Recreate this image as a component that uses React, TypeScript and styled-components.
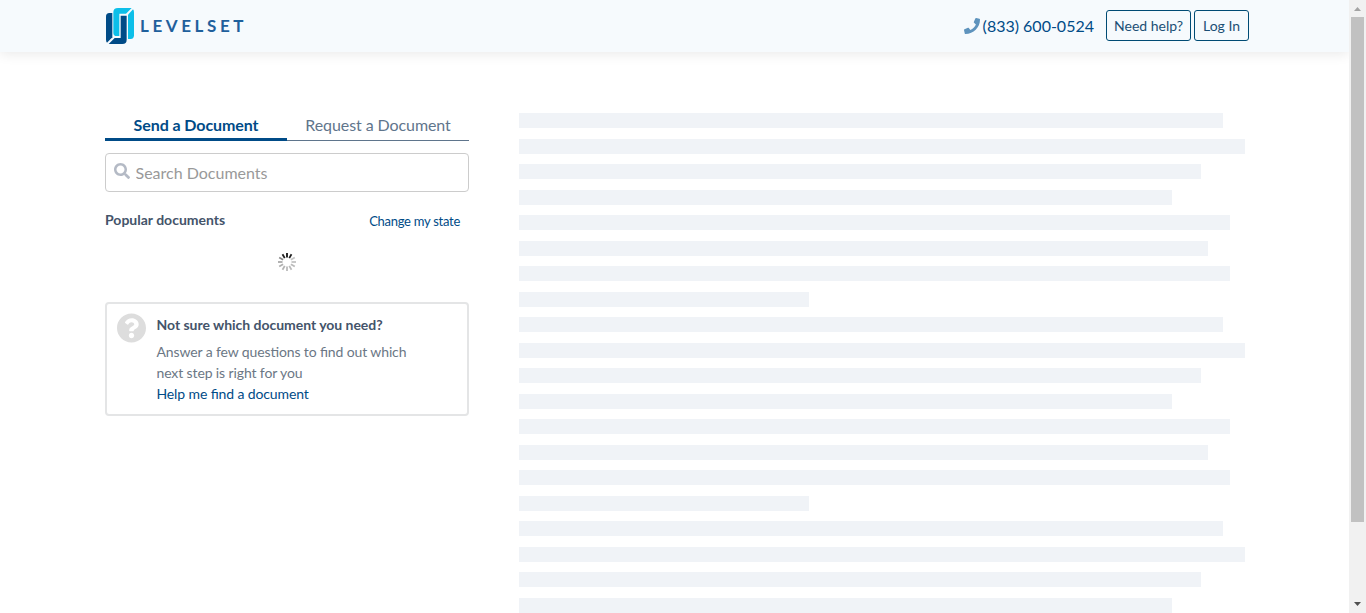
import React from 'react';
import styled, { createGlobalStyle } from 'styled-components';

const GlobalStyle = createGlobalStyle`
  *, *::before, *::after { box-sizing: border-box; }
  html, body { margin: 0; height: 100%; overflow: hidden; }
  body { background: #fff; font-family: Lato, "Liberation Sans", sans-serif; font-size: 16px; color: #5f6f82; }
  a { color: #004b87; text-decoration: none; }
`;

const Shell = styled.div`
  display: flex;
  height: 613px;
  overflow: hidden;
`;

const Page = styled.div`
  width: 1349px;
  height: 613px;
  overflow: hidden;
`;

const Header = styled.header`
  display: flex;
  justify-content: space-between;
  height: 52px;
  padding: 0 100px 0 106px;
  background: #f6fafd;
  box-shadow: 0 2px 12px rgba(0, 0, 0, 0.09);
`;

const Brand = styled.a`
  display: flex;
  align-items: flex-start;
  padding-top: 8px;
`;

const Wordmark = styled.span`
  margin: 7px 0 0 6px;
  font-size: 17px;
  line-height: 22px;
  font-weight: 700;
  letter-spacing: 3.6px;
  color: #1f609c;
`;

const HeaderNav = styled.nav`
  display: flex;
  align-items: flex-start;
  padding-top: 10px;
`;

const Phone = styled.a`
  display: flex;
  align-items: center;
  height: 32px;
  margin-right: 12px;
  font-size: 16px;
  svg { margin-right: 3px; }
`;

const PhoneNumber = styled.span`
  padding-bottom: 2px;
`;

const HeaderButton = styled.a<{ $width: number }>`
  width: ${p => p.$width}px;
  height: 31px;
  margin-left: ${p => (p.$width < 60 ? 3 : 0)}px;
  border: 1px solid #004b74;
  border-radius: 3px;
  font-size: 14px;
  line-height: 30px;
  text-align: center;
  color: #1b4f75;
  white-space: nowrap;
`;

const Content = styled.main`
  display: flex;
  gap: 50px;
  padding: 61px 104px 0 105px;
`;

const Sidebar = styled.section`
  width: 364px;
  flex: none;
`;

const Tabs = styled.div`
  display: flex;
  height: 28px;
`;

const Tab = styled.a<{ $active?: boolean }>`
  flex: 1;
  height: 28px;
  line-height: 23px;
  text-align: center;
  font-size: 16px;
  letter-spacing: -0.08px;
  font-weight: ${p => (p.$active ? 700 : 400)};
  color: ${p => (p.$active ? '#004b87' : '#5f758c')};
  border-bottom: ${p => (p.$active ? '3px solid #004b87' : '1px solid #5f758c')};
`;

const SearchBox = styled.label`
  display: flex;
  align-items: center;
  height: 39px;
  margin-top: 12px;
  padding: 0 8px;
  border: 1px solid #ccc;
  border-radius: 4px;
  svg { margin: 0 5.500px 4px 0; flex: none; }
`;

const SearchInput = styled.input`
  flex: 1;
  min-width: 0;
  height: 36px;
  padding: 0;
  border: 0;
  outline: 0;
  background: transparent;
  font: 400 16px Lato, sans-serif;
  &::placeholder { color: #999; opacity: 1; }
`;

const ListHeader = styled.div`
  display: flex;
  justify-content: space-between;
  height: 40px;
  margin-top: 18px;
  padding-right: 9px;
  line-height: 20px;
`;

const Heading = styled.strong`
  font-size: 14px;
  font-weight: 700;
  color: #44546a;
`;

const StateLink = styled.a`
  padding-top: 1px;
  font-size: 13px;
  letter-spacing: -0.27px;
`;

const Loading = styled.div`
  display: flex;
  justify-content: center;
  height: 52px;
  padding-top: 3px;
`;

const HelpCard = styled.aside`
  display: flex;
  height: 114px;
  padding: 9px 10px;
  border: 2px solid #e4e5e6;
  border-radius: 4px;
  svg { flex: none; margin-right: 10.500px; }
`;

const HelpText = styled.div`
  width: 270px;
  font-size: 14px;
  line-height: 21px;
  letter-spacing: -0.12px;
  font-feature-settings: "liga" 1;
  color: #6b7785;
`;

const HelpTitle = styled(Heading)`
  display: block;
  height: 28px;
  padding-top: 1px;
  letter-spacing: -0.03px;
`;

const Skeleton = styled.section`
  flex: 1;
  display: flex;
  flex-direction: column;
  gap: 10.5px;
`;

const SkeletonLine = styled.div<{ $w: number }>`
  width: ${p => p.$w}px;
  height: 15px;
  flex: none;
  background: #f0f3f7;
`;

const Scrollbar = styled.div`
  display: flex;
  flex-direction: column;
  align-items: center;
  width: 17px;
  height: 613px;
  background: #f1f1f1;
`;

const ScrollThumb = styled.div`
  width: 13px;
  height: 505px;
  margin-bottom: 74px;
  background: #c1c1c1;
`;

const LINE_WIDTHS = [704, 726, 682, 653, 711, 689, 711, 290];
const LINES = Array.from({ length: 20 }, (_, i) => LINE_WIDTHS[i % LINE_WIDTHS.length]);

const SPOKES = ['#111', '#222', '#c4c4c4', '#c4c4c4', '#bbb', '#bbb', '#bbb', '#b4b4b4', '#b0b0b0', '#aaa', '#888', '#222'];

const LogoMark = () => (
  <svg width="28" height="36" viewBox="0 0 84 108">
    <path fill="#004b87" d="M10 15H19V88L3 104Q0 101 0 95V26Q0 15 10 15Z" />
    <path fill="#004b87" d="M44 23H62V95Q62 108 49 108H8L26 90H44Z" />
    <path fill="#0dbfe9" d="M36 0H77L60 17H40V84H32Q22 84 22 74V13Q22 0 36 0Z" />
    <path fill="#0dbfe9" d="M81 4Q84 7 84 13V82Q84 93 74 93H66V20Z" />
  </svg>
);

const PhoneIcon = () => (
  <svg width="16" height="16" viewBox="0 0 512 512" fill="#5e93bd">
    <path d="M493.4 24.6l-104-24c-11.300-2.600-22.900 3.300-27.500 13.900l-48 112c-4.200 9.800-1.400 21.300 6.900 28l60.600 49.600c-36 76.700-98.900 140.500-177.200 177.200l-49.600-60.600c-6.800-8.300-18.200-11.100-28-6.900l-112 48C3.900 366.500-2 378.100.6 389.400l24 104C27.100 504.200 36.700 512 48 512c256.100 0 464-207.500 464-464 0-11.200-7.700-20.900-18.600-23.400z" />
  </svg>
);

const SearchIcon = () => (
  <svg width="16" height="16" viewBox="0 0 512 512" fill="#b4bac5">
    <path d="M505 442.700L405.300 343c-4.500-4.500-10.600-7-17-7H372c27.600-35.300 44-79.700 44-128C416 93.100 322.900 0 208 0S0 93.100 0 208s93.100 208 208 208c48.300 0 92.700-16.400 128-44v16.300c0 6.400 2.500 12.500 7 17l99.700 99.700c9.400 9.400 24.600 9.400 33.900 0l28.300-28.300c9.400-9.400 9.400-24.600.1-34zM208 336c-70.700 0-128-57.200-128-128 0-70.700 57.200-128 128-128 70.700 0 128 57.200 128 128 0 70.700-57.200 128-128 128z" />
  </svg>
);

const QuestionIcon = () => (
  <svg width="29" height="30" viewBox="8 8 496 496" fill="#ddd">
    <path d="M504 256c0 136.997-111.043 248-248 248S8 392.997 8 256C8 119.083 119.043 8 256 8s248 111.083 248 248zM262.655 90c-54.497 0-89.255 22.957-116.549 63.758-3.536 5.286-2.353 12.415 2.715 16.258l34.699 26.310c5.205 3.947 12.621 3.008 16.665-2.122 17.864-22.658 30.113-35.797 57.303-35.797 20.429 0 45.698 13.148 45.698 32.958 0 14.976-12.363 22.667-32.534 33.976C247.128 238.528 216 254.941 216 296v4c0 6.627 5.373 12 12 12h56c6.627 0 12-5.373 12-12v-1.333c0-28.462 83.186-29.647 83.186-106.667 0-58.002-60.165-102-116.531-102zM256 338c-25.365 0-46 20.635-46 46 0 25.364 20.635 46 46 46s46-20.636 46-46c0-25.365-20.635-46-46-46z" />
  </svg>
);

const Spinner = () => (
  <svg width="18" height="18" viewBox="0 0 18 18">
    {SPOKES.map((color, i) => (
      <rect key={i} x="8.100" y="0" width="1.800" height="4.500" fill={color} transform={`rotate(${i * 30} 9 9)`} />
    ))}
  </svg>
);

export default function App() {
  return (
    <>
      <GlobalStyle />
      <Shell>
        <Page>
          <Header>
            <Brand href="#"><LogoMark /><Wordmark>LEVELSET</Wordmark></Brand>
            <HeaderNav>
              <Phone href="#"><PhoneIcon /><PhoneNumber>(833) 600-0524</PhoneNumber></Phone>
              <HeaderButton href="#" $width={85}>Need help?</HeaderButton>
              <HeaderButton href="#" $width={55}>Log In</HeaderButton>
            </HeaderNav>
          </Header>
          <Content>
            <Sidebar>
              <Tabs>
                <Tab $active>Send a Document</Tab>
                <Tab>Request a Document</Tab>
              </Tabs>
              <SearchBox><SearchIcon /><SearchInput placeholder="Search Documents" /></SearchBox>
              <ListHeader>
                <Heading>Popular documents</Heading>
                <StateLink href="#">Change my state</StateLink>
              </ListHeader>
              <Loading><Spinner /></Loading>
              <HelpCard>
                <QuestionIcon />
                <HelpText>
                  <HelpTitle>Not sure which document you need?</HelpTitle>
                  Answer a few questions to find out which next step is right for you<br />
                  <a href="#">Help me find a document</a>
                </HelpText>
              </HelpCard>
            </Sidebar>
            <Skeleton>
              {LINES.map((w, i) => <SkeletonLine key={i} $w={w} />)}
            </Skeleton>
          </Content>
        </Page>
        <Scrollbar>
          <svg width="17" height="17" viewBox="0 0 17 17"><path d="M5 11L8.500 7L12 11Z" fill="#a3a3a3" /></svg>
          <ScrollThumb />
          <svg width="17" height="17" viewBox="0 0 17 17"><path d="M5 6L8.500 10L12 6Z" fill="#505050" /></svg>
        </Scrollbar>
      </Shell>
    </>
  );
}
